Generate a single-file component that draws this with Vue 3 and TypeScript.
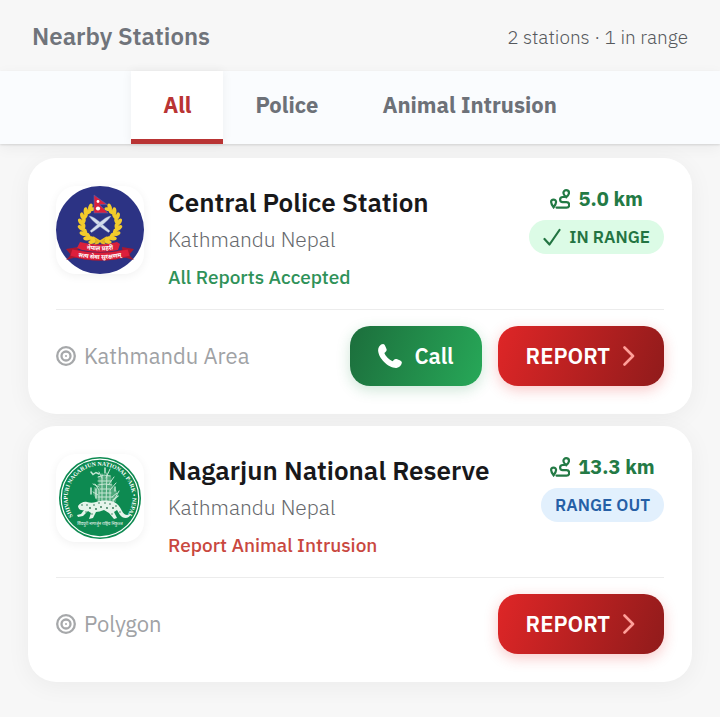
<script setup lang="ts">
import { computed, ref } from 'vue'

type Category = 'police' | 'animal'

interface Station {
  id: string
  name: string
  address: string
  category: Category
  reports: string
  distance: string
  inRange: boolean
  area: string
  callable: boolean
}

const stations: Station[] = [
  {
    id: 'central-police',
    name: 'Central Police Station',
    address: 'Kathmandu Nepal',
    category: 'police',
    reports: 'All Reports Accepted',
    distance: '5.0 km',
    inRange: true,
    area: 'Kathmandu Area',
    callable: true,
  },
  {
    id: 'nagarjun-reserve',
    name: 'Nagarjun National Reserve',
    address: 'Kathmandu Nepal',
    category: 'animal',
    reports: 'Report Animal Intrusion',
    distance: '13.3 km',
    inRange: false,
    area: 'Polygon',
    callable: false,
  },
]

const tabs: { key: 'all' | Category; label: string }[] = [
  { key: 'all', label: 'All' },
  { key: 'police', label: 'Police' },
  { key: 'animal', label: 'Animal Intrusion' },
]

const active = ref<'all' | Category>('all')
const visible = computed(() =>
  stations.filter((s) => active.value === 'all' || s.category === active.value),
)
const inRangeCount = computed(() => visible.value.filter((s) => s.inRange).length)

// Laurel leaves: angle measured in degrees from the bottom of the wreath.
const leaves = [16, 34, 52, 70, 88, 106, 124, 142]
</script>

<template>
  <main class="page">
    <header class="header">
      <h1 class="heading">Nearby Stations</h1>
      <p class="summary">{{ visible.length }} stations · {{ inRangeCount }} in range</p>
    </header>

    <nav class="tabs">
      <button
        v-for="tab in tabs"
        :key="tab.key"
        type="button"
        class="tab"
        :class="{ active: active === tab.key }"
        @click="active = tab.key"
      >
        {{ tab.label }}
      </button>
    </nav>

    <section class="list">
      <article v-for="s in visible" :key="s.id" class="card">
        <div class="card-top">
          <div class="logo">
            <svg v-if="s.category === 'police'" viewBox="0 0 88 88" class="logo-art">
              <circle cx="44" cy="44" r="44" fill="#2c3384" />
              <g fill="none" stroke="#dcae22" stroke-width="3.4">
                <path d="M43 56C32 54 26 46 26.500 37 27 30 31 25 36 22" />
                <path d="M45 56C56 54 62 46 61.500 37 61 30 57 25 52 22" />
                <path d="M51 51L38 59M37 51L50 59" stroke="#e9bd25" stroke-width="1.600" />
              </g>
              <g fill="#f3cb2c">
                <template v-for="a in leaves" :key="a">
                  <g :transform="`rotate(${a} 44 38)`">
                    <ellipse cx="41" cy="54.500" rx="3.400" ry="1.900" transform="rotate(28 41 54.500)" />
                    <ellipse cx="41" cy="57.500" rx="3.400" ry="1.900" transform="rotate(-28 41 57.500)" />
                  </g>
                  <g :transform="`rotate(${-a} 44 38)`">
                    <ellipse cx="47" cy="54.500" rx="3.400" ry="1.900" transform="rotate(-28 47 54.500)" />
                    <ellipse cx="47" cy="57.500" rx="3.400" ry="1.900" transform="rotate(28 47 57.500)" />
                  </g>
                </template>
              </g>
              <path d="M38 9L51 18.500H43.500L52 27H38Z" fill="#d9213c" stroke="#5461b0" stroke-width=".6" />
              <circle cx="42" cy="15.500" r="1.400" fill="#fff" />
              <circle cx="42" cy="22.500" r="2.100" fill="#fff" />
              <g fill="#d3dcec" stroke="#8f9cc4" stroke-width=".4">
                <path d="M33 30C37 30 43 35 54 45L52.500 46.500 49.500 44.500C43 40 36 35 33 30Z" />
                <path d="M55 30C51 30 45 35 34 45L35.500 46.500 38.500 44.500C45 40 52 35 55 30Z" />
              </g>
              <path d="M10 63L22 61 21 71 10 74 15 69ZM78 63L66 61 67 71 78 74 73 69Z" fill="#a91830" />
              <path d="M24 56Q44 61 61 56L64 58 62 64Q44 68 26 64L21 62Z" fill="#d9203b" />
              <path d="M16 63Q44 70 72 63L74 70Q44 79 14 70Z" fill="#dc1f3b" stroke="#97172f" stroke-width=".5" />
              <path id="ribbon-upper" d="M25 62.500Q44 66 63 62.500" fill="none" />
              <path id="ribbon-lower" d="M15 69Q44 77 73 69" fill="none" />
              <g fill="#fff" font-weight="700" text-anchor="middle" class="script">
                <text font-size="6"><textPath href="#ribbon-upper" startOffset="50%">नेपाल प्रहरी</textPath></text>
                <text font-size="6"><textPath href="#ribbon-lower" startOffset="50%">सत्य सेवा सुरक्षणम्</textPath></text>
              </g>
            </svg>

            <svg v-else viewBox="0 0 88 88" class="logo-art">
              <circle cx="44" cy="44" r="41" fill="#0d8a51" />
              <circle cx="44" cy="44" r="38.800" fill="none" stroke="#fff" stroke-width="1.200" />
              <path id="seal-arc" d="M20.300 66.100A32.400 32.400 0 1 1 67.700 66.100" fill="none" />
              <text class="seal" fill="#fff" font-size="5.800" text-anchor="middle">
                <textPath href="#seal-arc" startOffset="50%">SHIVAPURI NAGARJUN NATIONAL PARK • NEPAL</textPath>
              </text>
              <path d="M42 22L55 21 56 32 61 37 60 48H42L37 40 38 33 43 34Z" fill="#4fa97c" />
              <g fill="none" stroke="#c4e6d3" stroke-width="1" stroke-linecap="round">
                <path d="M43 49V36L39 30M46 49V20M50 49L51 19M54 48V36L60 29M57 48L63 37" />
                <path d="M42 23L48 21L54 22M42 27H55M42 31L49 30L56 31M44 35H54M43 39H55M42 43H57" />
                <path d="M43 18L46 24M54 15L50 24M58 23L53 30M37 30L43 33M37 38L42 41M61 39L56 43" />
                <path d="M35 18L37 20.500L40 18.500L43 20M49 14V19M35 34V40M59 33V37M40 35V44M62 42L57 46" stroke-width="1.500" />
              </g>
              <path
                d="M22 52C24 49 28 47 31 48C34 49 37 49 40 48C46 46 53 46 58 48C62 50 64 53 66 57C68 61 71 62 75 60C73 65 67 65 64 61L61 56L58 58L61 64L58 65L53 59L48 56C45 57 42 58 40 58L37 64L33 65L35 59L32 57L27 62L22 63L21 61L25 60L28 56C25 57 22 55 22 52Z"
                fill="#e6f4eb"
              />
              <g fill="#27704b">
                <circle cx="26" cy="51" r=".8" /><circle cx="31" cy="51" r=".8" />
                <circle cx="34" cy="54" r=".9" /><circle cx="38" cy="51" r=".8" />
                <circle cx="40" cy="55" r=".9" /><circle cx="43" cy="49" r=".8" />
                <circle cx="45" cy="53" r=".9" /><circle cx="49" cy="49" r=".8" />
                <circle cx="51" cy="54" r=".9" /><circle cx="54" cy="50" r=".8" />
                <circle cx="57" cy="54" r=".9" /><circle cx="60" cy="52" r=".8" />
                <circle cx="30" cy="58" r=".7" /><circle cx="36" cy="60" r=".7" />
                <circle cx="56" cy="60" r=".7" /><circle cx="64" cy="58" r=".7" />
              </g>
              <text x="44" y="71" text-anchor="middle" fill="#fff" font-size="4" class="script">शिवपुरी नागार्जुन राष्ट्रिय निकुञ्ज</text>
            </svg>
          </div>

          <div class="info">
            <h2 class="name">{{ s.name }}</h2>
            <p class="address">{{ s.address }}</p>
            <p class="reports" :class="s.category">{{ s.reports }}</p>
          </div>

          <div class="range">
            <div class="distance">
              <svg class="route" viewBox="0 0 20 20" fill="none" stroke="currentColor" stroke-width="2.200">
                <path d="M3.600 18.300C1.900 16 1.100 14.700 1.100 13.100A2.500 2.500 0 0 1 6.100 13.100C6.100 14.700 5.300 16 3.600 18.300Z" />
                <path d="M16.200 8.300C14.300 6.400 13.400 5.300 13.400 3.900A2.800 2.800 0 0 1 19 3.900C19 5.300 18.100 6.400 16.200 8.300Z" />
                <path d="M14.500 8H12.700A2.600 2.600 0 0 0 12.700 13.200H16.500A2.700 2.700 0 0 1 16.500 18.600H6.500" stroke-linecap="round" />
              </svg>
              <span>{{ s.distance }}</span>
            </div>
            <div class="badge" :class="s.inRange ? 'in' : 'out'">
              <svg v-if="s.inRange" class="check" viewBox="0 0 18 18" fill="none" stroke="currentColor" stroke-width="2.200" stroke-linecap="round" stroke-linejoin="round">
                <path d="M1.500 11L6.500 16.500L16.500 2" />
              </svg>
              <span>{{ s.inRange ? 'IN RANGE' : 'RANGE OUT' }}</span>
            </div>
          </div>
        </div>

        <footer class="card-bottom">
          <div class="area">
            <svg class="target" viewBox="0 0 20 20" fill="none" stroke="currentColor" stroke-width="2.300">
              <circle cx="10" cy="10" r="8.800" />
              <circle cx="10" cy="10" r="4.500" />
              <circle cx="10" cy="10" r="1" fill="currentColor" stroke="none" />
            </svg>
            <span>{{ s.area }}</span>
          </div>
          <div class="actions">
            <button v-if="s.callable" type="button" class="btn call">
              <svg class="phone" viewBox="0 0 24 24" fill="currentColor">
                <path d="M1.200 2.600C2.400.8 4 0 5.200.1C6 .2 6.600.8 7.100 1.800L8.500 5.100C8.900 6.200 8.500 7 7.500 8L6.400 9.100C7.500 12.300 11 15.800 14.600 17.300L15.800 15.900C16.700 14.900 17.600 14.700 18.700 15.100L22.200 16.500C23.500 17.100 24 18 23.800 19C23.300 21.200 21.400 23.600 18.500 24C10.500 24.200.4 14.600.1 6.300C.1 4.900.5 3.600 1.200 2.600Z" />
              </svg>
              <span>Call</span>
            </button>
            <button type="button" class="btn report">
              <span>REPORT</span>
              <svg class="chevron" viewBox="0 0 14 20" fill="none" stroke="#ff9f99" stroke-width="2.600" stroke-linecap="round" stroke-linejoin="round">
                <path d="M2.500 1.500L11 10L2.500 18.500" />
              </svg>
            </button>
          </div>
        </footer>
      </article>
    </section>
  </main>
</template>

<style>
body {
  margin: 0;
  background: #f7f7f7;
}
</style>

<style scoped>
.page {
  min-height: 100vh;
  font-family: 'IBM Plex Sans', Roboto, 'Noto Sans', sans-serif;
  color: #18181a;
}

h1,
h2,
p {
  margin: 0;
}

button {
  border: 0;
  font: inherit;
  cursor: pointer;
}

.header {
  display: flex;
  align-items: flex-end;
  justify-content: space-between;
  padding: 20px 32px 18px;
}

.heading {
  font-size: 24px;
  line-height: 33px;
  font-weight: 600;
  color: #70747b;
}

.summary {
  font-size: 19px;
  line-height: 32px;
  font-weight: 300;
  color: #56595d;
}

.tabs {
  position: relative;
  display: flex;
  justify-content: center;
  background: #fafcfe;
  box-shadow: 0 1px 2px rgba(0, 0, 0, 0.12), 0 4px 14px rgba(0, 0, 0, 0.05);
}

.tab {
  padding: 18px 32px;
  border-bottom: 5px solid transparent;
  background: none;
  font-size: 22px;
  line-height: 32px;
  font-weight: 700;
  color: #6d7178;
}

.tab.active {
  border-color: #b93434;
  background: #fff;
  color: #b93434;
  box-shadow: 0 0 10px rgba(0, 0, 0, 0.06);
}

.list {
  display: grid;
  gap: 12px;
  padding: 14px 28px 35px;
}

.card {
  padding: 28px;
  border-radius: 28px;
  background: #fff;
  box-shadow: 0 4px 24px rgba(0, 0, 0, 0.05);
}

.card-top {
  display: flex;
  align-items: flex-start;
  gap: 24px;
  padding-bottom: 19px;
  border-bottom: 1px solid #ececec;
}

.logo {
  flex: none;
  width: 88px;
  height: 88px;
  border-radius: 20px;
  box-shadow: 0 2px 10px rgba(0, 0, 0, 0.06);
}

.logo-art {
  display: block;
  width: 100%;
  height: 100%;
}

.script {
  font-family: 'Noto Sans', sans-serif;
}

.seal {
  font-family: 'Liberation Serif', serif;
  font-weight: 700;
}

.info {
  flex: 1;
  min-width: 0;
}

.name {
  font-size: 26px;
  line-height: 32px;
  font-weight: 600;
}

.address {
  margin-top: 8px;
  font-size: 21px;
  line-height: 26px;
  font-weight: 300;
  color: #66686c;
}

.reports {
  margin-top: 12px;
  font-size: 19px;
  line-height: 26px;
  font-weight: 500;
}

.reports.police {
  color: #2f9259;
}

.reports.animal {
  color: #c9483f;
}

.range {
  display: flex;
  flex-direction: column;
  align-items: center;
  gap: 8px;
}

.distance {
  display: flex;
  align-items: center;
  gap: 8px;
  font-size: 20px;
  line-height: 26px;
  font-weight: 700;
  color: #237a45;
}

.route {
  width: 20px;
  height: 20px;
}

.badge {
  display: flex;
  align-items: center;
  gap: 8px;
  padding: 0 14px;
  border-radius: 17px;
  font-size: 17px;
  line-height: 34px;
  font-weight: 600;
}

.badge.in {
  background: #dcfbe6;
  color: #237442;
}

.badge.out {
  background: #e2f0fd;
  color: #265fa6;
}

.check {
  width: 18px;
  height: 18px;
}

.card-bottom {
  display: flex;
  align-items: center;
  justify-content: space-between;
  padding-top: 16px;
}

.area {
  display: flex;
  align-items: center;
  gap: 8px;
  font-size: 22px;
  line-height: 30px;
  font-weight: 400;
  color: #a0a2a5;
}

.target {
  width: 20px;
  height: 20px;
  color: #a6a8aa;
}

.actions {
  display: flex;
  gap: 16px;
}

.btn {
  display: flex;
  align-items: center;
  gap: 12px;
  height: 60px;
  padding: 0 28px;
  border-radius: 20px;
  font-size: 22px;
  line-height: 58px;
  font-weight: 600;
  color: #fff;
}

.call {
  background: linear-gradient(110deg, #1c6e3c, #27a858);
  box-shadow: 0 4px 14px rgba(34, 140, 74, 0.22);
}

.report {
  background: linear-gradient(110deg, #df2627, #901b1b);
  box-shadow: 0 4px 14px rgba(230, 40, 40, 0.25);
}

.phone {
  width: 24px;
  height: 24px;
}

.chevron {
  width: 14px;
  height: 20px;
}
</style>
